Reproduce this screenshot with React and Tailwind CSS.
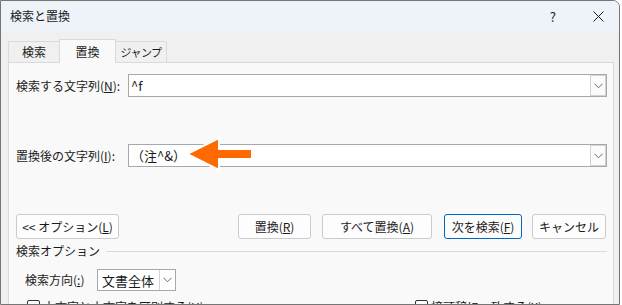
import React from 'react';

function Chevron({ className = '' }) {
  return (
    <svg className={className} width="9" height="6" viewBox="0 0 9 6" fill="none">
      <polyline points="0.5,0.8 4.5,4.8 8.5,0.8" stroke="#6a6a6a" strokeWidth="1" />
    </svg>
  );
}

function ComboBox({ value }) {
  return (
    <div className="flex-1 h-[23px] border border-[#a7a7ae] bg-white flex items-center">
      <span className="flex-1 pl-[2px] text-[13px] leading-none whitespace-pre">{value}</span>
      <div className="w-[16px] h-[21px] border border-[#d2d2d2] bg-[#fbfbfb] flex items-center justify-center">
        <Chevron />
      </div>
    </div>
  );
}

function Btn({ children, className = '', primary }) {
  return (
    <button
      className={
        'h-[25px] rounded-[3px] border bg-[#fdfdfd] text-[12px] leading-none flex items-center justify-center whitespace-pre ' +
        (primary ? 'border-[#0067c0] ' : 'border-[#cbcbcb] ') +
        className
      }
    >
      {children}
    </button>
  );
}

function Tab({ children, active, className = '' }) {
  if (active) {
    return (
      <div className={'h-[24px] -mb-px z-10 bg-[#f9f9f9] border border-b-0 border-[#dadada] flex items-center justify-center text-[12px] ' + className}>
        {children}
      </div>
    );
  }
  return (
    <div className={'h-[21px] bg-[#f0f0f0] border border-b-0 border-[#dadada] flex items-center justify-center text-[12px] ' + className}>
      {children}
    </div>
  );
}

export default function App() {
  return (
    <div className="w-[622px] h-[305px] bg-white overflow-hidden text-[#1b1b1b] font-['Noto_Sans_CJK_JP','Liberation_Sans',sans-serif]">
      <div className="w-[620px] h-[305px] border border-[#767676] rounded-tr-[7px] bg-[#f0f0f0] overflow-hidden flex flex-col">
        {/* title bar */}
        <div className="h-[30px] shrink-0 bg-[#eef2f9] flex items-center">
          <span className="pl-[9px] text-[12px] leading-none">検索と置換</span>
          <span className="ml-auto mr-[37px] text-[13px] leading-none">?</span>
          <svg className="mr-[15px]" width="11" height="11" viewBox="0 0 11 11">
            <path d="M0.5 0.5 L10.5 10.5 M10.5 0.5 L0.5 10.5" stroke="#1b1b1b" strokeWidth="1" />
          </svg>
        </div>

        {/* tabs */}
        <div className="mt-[8px] pl-[7px] flex items-end shrink-0 relative">
          <Tab className="w-[52px]">検索</Tab>
          <Tab active className="w-[57px] -ml-px">置換</Tab>
          <Tab className="w-[52px] -ml-px">
            <span className="text-[11px] tracking-[-0.5px]">ジャンプ</span>
          </Tab>
        </div>

        {/* panel */}
        <div className="ml-[7px] mr-[5px] flex-1 border border-b-0 border-[#dadada] bg-[#f9f9f9] pl-[7px] pr-[6px] relative">
          <div className="mt-[11px] flex items-center">
            <span className="w-[112px] text-[12px] leading-none">
              検索する文字列(<u>N</u>):
            </span>
            <ComboBox value="^f" />
          </div>

          <div className="mt-[47px] flex items-center">
            <span className="w-[112px] text-[12px] leading-none">
              置換後の文字列(<u>I</u>):
            </span>
            <ComboBox value="（注^&）" />
          </div>

          {/* annotation arrow */}
          <svg className="absolute left-[175px] top-[72px]" width="72" height="38" viewBox="0 0 72 38">
            <polygon
              points="3,19 35,3 35,14 68,14 68,24 35,24 35,35"
              fill="#ff6a00"
              stroke="#ffffff"
              strokeWidth="2"
              strokeLinejoin="round"
            />
          </svg>

          <div className="mt-[47px] flex items-center">
            <Btn className="w-[103px]">
              {'<< オプション('}<u>L</u>)
            </Btn>
            <Btn className="w-[73px] ml-auto">
              置換(<u>R</u>)
            </Btn>
            <Btn className="w-[110px] ml-[11px]">
              すべて置換(<u>A</u>)
            </Btn>
            <Btn primary className="w-[78px] ml-[12px]">
              次を検索(<u>F</u>)
            </Btn>
            <Btn className="w-[74px] ml-[10px] mr-[1px]">キャンセル</Btn>
          </div>

          <div className="mt-[4px] flex items-center h-[16px]">
            <span className="text-[12px] leading-none">検索オプション</span>
            <div className="flex-1 ml-[6px] h-px bg-[#dadada]" />
          </div>

          <div className="mt-[10px] pl-[9px] flex items-center">
            <span className="w-[72px] text-[12px] leading-none">
              検索方向(<u>:</u>)
            </span>
            <div className="w-[79px] h-[22px] border border-[#a7a7ae] bg-white flex items-center">
              <span className="flex-1 pl-[4px] text-[13px] leading-none">文書全体</span>
              <div className="w-[16px] h-full border-l border-[#d2d2d2] flex items-center justify-center">
                <Chevron />
              </div>
            </div>
          </div>

          <div className="mt-[9px] flex items-start">
            <div className="ml-[11px] w-[388px] flex items-center">
              <div className="w-[13px] h-[13px] border border-[#333] rounded-[2px] bg-white" />
              <span className="ml-[3px] text-[12px] leading-none">大文字と小文字を区別する(<u>H</u>)</span>
            </div>
            <div className="flex items-center">
              <div className="w-[13px] h-[13px] border border-[#333] rounded-[2px] bg-white" />
              <span className="ml-[3px] text-[12px] leading-none">接頭辞に一致する(<u>X</u>)</span>
            </div>
          </div>
        </div>
      </div>
    </div>
  );
}
